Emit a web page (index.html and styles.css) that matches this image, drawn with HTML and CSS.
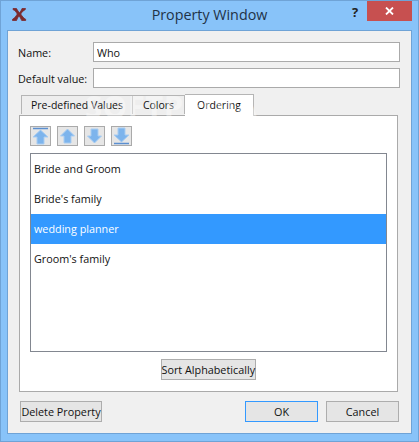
FILE: index.html
```html
<!DOCTYPE html>
<html lang="en">
<head>
  <meta charset="UTF-8" />
  <title>Property Window</title>
  <link rel="stylesheet" href="styles.css">
</head>
<body>
<div class="window">
  <header class="titlebar">
    <svg class="app-icon" width="15" height="15" viewBox="0 0 15 15">
      <path d="M1 1.500h3.500c1 2 2 3.200 3 4.500 1-1.300 1.800-2.500 2.500-4.500h3.500l-.3 1.200c-1.700.6-3.300 2.400-4.500 4.300 1.300 2 2.800 4.200 5 5.300v1.200h-4c-.8-2-1.700-3.300-2.700-4.700-1 1.400-1.800 2.700-2.500 4.700H.5v-1.200c2.100-1.100 3.600-3.300 4.800-5.200C4.200 5 2.800 3.200 1 2.600z" fill="#7b2a2e" stroke="#7b2a2e" stroke-width="0.8"/>
    </svg>
    <span class="title">Property Window</span>
    <span class="help">?</span>
    <button class="close">
      <svg width="9" height="8" viewBox="0 0 9 8"><path d="M1 .5l7 7M8 .5l-7 7" stroke="#fff" stroke-width="1.800" fill="none"/></svg>
    </button>
  </header>

  <main class="client">
    <div class="field">
      <label>Name:</label>
      <input type="text" value="Who" />
    </div>
    <div class="field">
      <label>Default value:</label>
      <input type="text" />
    </div>

    <div class="tabs">
      <div class="tab tab-first">Pre-defined Values</div>
      <div class="tab tab-mid">Colors</div>
      <div class="tab tab-active">Ordering</div>
    </div>

    <section class="pane">
      <div class="toolbar">
        <button class="tool">
          <svg width="17" height="18" viewBox="0 0 17 18"><path d="M1 1.500h15" stroke="#5b8fd0" stroke-width="1.500"/><path d="M8.500 3L16 10h-4v7H5v-7H1z" fill="#7db4ec" stroke="#a9cdf2"/></svg>
        </button>
        <button class="tool">
          <svg width="15" height="16" viewBox="0 0 15 16"><path d="M7.500 1L14.500 8h-3.500v7H4V8H.5z" fill="#7db4ec" stroke="#a9cdf2"/></svg>
        </button>
        <button class="tool">
          <svg width="15" height="16" viewBox="0 0 15 16"><path d="M7.500 15L14.500 8h-3.500V1H4v7H.5z" fill="#7db4ec" stroke="#a9cdf2"/></svg>
        </button>
        <button class="tool">
          <svg width="17" height="18" viewBox="0 0 17 18"><path d="M1 16.500h15" stroke="#5b8fd0" stroke-width="1.500"/><path d="M8.500 15L16 8h-4V1H5v7H1z" fill="#7db4ec" stroke="#a9cdf2"/></svg>
        </button>
      </div>

      <ul class="list">
        <li>Bride and Groom</li>
        <li>Bride's family</li>
        <li class="selected">wedding planner</li>
        <li>Groom's family</li>
      </ul>

      <div class="sort-row">
        <button class="btn btn-sort">Sort Alphabetically</button>
      </div>
    </section>

    <footer class="actions">
      <button class="btn btn-delete">Delete Property</button>
      <div class="actions-right">
        <button class="btn btn-wide btn-default">OK</button>
        <button class="btn btn-wide">Cancel</button>
      </div>
    </footer>
  </main>
  <div class="watermark">SOFTPEDIA</div>
</div>
</body>
</html>
```

FILE: styles.css
```css
html, body {
  margin: 0;
  padding: 0;
}
body {
  width: 419px;
  height: 442px;
  overflow: hidden;
  font-family: "Open Sans", "Noto Sans", Arial, sans-serif;
  font-size: 10.8px;
  color: #111;
}
.window {
  position: relative;
  box-sizing: border-box;
  width: 419px;
  height: 442px;
  background-color: #88c3f9;
  border: 1px solid #6fa3d6;
  padding: 0 6px 7px;
  display: flex;
  flex-direction: column;
}
.titlebar {
  height: 29px;
  flex: none;
  display: flex;
  align-items: flex-start;
  position: relative;
}
.app-icon {
  margin: 6px 0 0 5px;
}
.title {
  flex: 1;
  text-align: center;
  font-size: 14.3px;
  line-height: 20px;
  margin-top: 4px;
  padding-right: 20px;
  color: #1f3247;
}
.help {
  position: absolute;
  left: 345px;
  top: 2px;
  font-weight: bold;
  font-size: 13px;
  line-height: 18px;
  color: #222;
}
.close {
  position: absolute;
  right: 0;
  top: 0;
  width: 45px;
  height: 20px;
  border: none;
  padding: 0;
  background-color: #c75050;
  display: flex;
  align-items: center;
  justify-content: center;
}
.client {
  flex: 1;
  background-color: #f0f0f0;
  border: 1px solid #6fa3d6;
  padding: 11px 11px 0 11px;
  display: flex;
  flex-direction: column;
}
.field {
  display: flex;
  align-items: center;
  height: 20px;
  margin-bottom: 6px;
}
.field label {
  width: 75px;
  margin-left: -1px;
  flex: none;
}
.field input {
  box-sizing: border-box;
  width: 307px;
  height: 20px;
  border: 1px solid #aaa;
  background: #fff;
  padding: 0 3px;
  font: inherit;
  color: #111;
  outline: none;
}
.tabs {
  display: flex;
  align-items: flex-end;
  height: 21px;
  padding-left: 2px;
  position: relative;
  z-index: 1;
}
.tab {
  box-sizing: border-box;
  height: 19px;
  margin-bottom: 1px;
  line-height: 18px;
  text-align: center;
  background-color: #eeeeee;
  border: 1px solid #b5b5b5;
  border-bottom: none;
  font-size: 10.5px;
}
.tab-first {
  width: 112px;
}
.tab-mid {
  width: 52px;
  border-left: none;
}
.tab-active {
  width: 69px;
  height: 22px;
  margin-bottom: -1px;
  background-color: #fff;
  border-left: none;
  line-height: 20px;
}
.pane {
  box-sizing: border-box;
  width: 379px;
  height: 277px;
  background-color: #fff;
  border: 1px solid #aaa;
  padding: 10px 10px 0;
  display: flex;
  flex-direction: column;
}
.toolbar {
  display: flex;
  gap: 6px;
  height: 20px;
}
.tool {
  box-sizing: border-box;
  width: 21px;
  height: 20px;
  padding: 0;
  border: 1px solid #aaa;
  background-color: #e6e6e6;
  display: flex;
  align-items: center;
  justify-content: center;
}
.list {
  box-sizing: border-box;
  list-style: none;
  margin: 7px 0 0;
  padding: 0;
  width: 357px;
  height: 199px;
  border: 1px solid #828790;
}
.list li {
  height: 30px;
  line-height: 29px;
  padding-left: 3px;
}
.list li.selected {
  background-color: #3399ff;
  color: #fff;
}
.sort-row {
  display: flex;
  justify-content: center;
  margin-top: 7px;
  padding-right: 1px;
}
.btn {
  box-sizing: border-box;
  height: 21px;
  padding: 0;
  border: 1px solid #adadad;
  background-color: #e5e5e5;
  font: inherit;
  color: #111;
  white-space: nowrap;
}
.btn-sort {
  width: 95px;
}
.actions {
  display: flex;
  justify-content: space-between;
  margin-top: 9px;
  width: 380px;
  padding-left: 1px;
  box-sizing: border-box;
}
.btn-delete {
  width: 82px;
}
.actions-right {
  display: flex;
  gap: 8px;
}
.btn-wide {
  width: 73px;
}
.btn-default {
  border-color: #3399ff;
}
.watermark {
  position: absolute;
  left: 84px;
  top: 90px;
  font-size: 31px;
  font-weight: bold;
  line-height: 30px;
  letter-spacing: 0.5px;
  color: rgba(255, 255, 255, 0.4);
  pointer-events: none;
  z-index: 2;
}
```
